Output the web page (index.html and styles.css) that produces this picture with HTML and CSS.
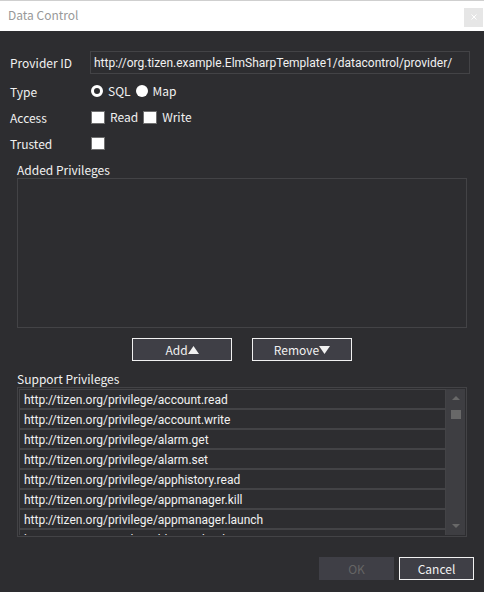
FILE: index.html
```html
<!DOCTYPE html>
<html lang="en">
<head>
<meta charset="utf-8">
<title>Data Control</title>
<link rel="stylesheet" href="styles.css">
</head>
<body>
<div class="dialog">
  <header class="titlebar">
    <h1 class="title">Data Control</h1>
    <button class="close" type="button" aria-label="Close"><svg width="6" height="6" viewBox="0 0 6 6"><path d="M.5 .5L5.500 5.500M5.500 .5L.5 5.500"/></svg></button>
  </header>
  <form class="content">
    <div class="field provider">
      <label class="name" for="provider">Provider ID</label>
      <input class="text" id="provider" type="text" value="http://org.tizen.example.ElmSharpTemplate1/datacontrol/provider/">
    </div>
    <div class="field">
      <span class="name">Type</span>
      <label class="choice"><input class="radio" type="radio" name="type" checked>SQL</label>
      <label class="choice"><input class="radio" type="radio" name="type">Map</label>
    </div>
    <div class="field">
      <span class="name">Access</span>
      <label class="choice"><input class="check" type="checkbox">Read</label>
      <label class="choice"><input class="check" type="checkbox">Write</label>
    </div>
    <div class="field">
      <label class="name" for="trusted">Trusted</label>
      <span class="choice"><input class="check" id="trusted" type="checkbox"></span>
    </div>
    <section class="group added">
      <h2 class="caption">Added Privileges</h2>
      <div class="box"></div>
    </section>
    <div class="moves">
      <button class="btn wide" type="button">Add<svg width="11" height="8" viewBox="0 0 11 8"><path d="M5.500 0L11 8H0z"/></svg></button>
      <button class="btn wide" type="button">Remove<svg width="11" height="8" viewBox="0 0 11 8"><path d="M0 0H11L5.500 8z"/></svg></button>
    </div>
    <section class="group">
      <h2 class="caption">Support Privileges</h2>
      <div class="box list">
        <ul class="items">
          <li class="item">http://tizen.org/privilege/account.read</li>
          <li class="item">http://tizen.org/privilege/account.write</li>
          <li class="item">http://tizen.org/privilege/alarm.get</li>
          <li class="item">http://tizen.org/privilege/alarm.set</li>
          <li class="item">http://tizen.org/privilege/apphistory.read</li>
          <li class="item">http://tizen.org/privilege/appmanager.kill</li>
          <li class="item">http://tizen.org/privilege/appmanager.launch</li>
          <li class="item">http://tizen.org/privilege/bluetooth.admin</li>
        </ul>
        <div class="scrollbar">
          <svg width="8" height="4" viewBox="0 0 8 4"><path d="M4 0L8 4H0z"/></svg>
          <div class="track"><div class="thumb"></div></div>
          <svg width="8" height="4" viewBox="0 0 8 4"><path d="M0 0H8L4 4z"/></svg>
        </div>
      </div>
    </section>
    <footer class="actions">
      <button class="btn" type="button" disabled>OK</button>
      <button class="btn" type="button">Cancel</button>
    </footer>
  </form>
</div>
</body>
</html>
```
FILE: styles.css
```css
* { box-sizing: border-box; }

body {
  margin: 0;
  background: #2d2d30;
  color: #f1f1f1;
  font: 12px/16px "Noto Sans CJK KR", "Noto Sans", sans-serif;
}

button, input { font: inherit; color: inherit; }

.dialog { min-height: 100vh; }

.titlebar {
  display: flex;
  align-items: center;
  justify-content: space-between;
  height: 31px;
  padding: 2px 1px 0 8px;
  border-top: 1px solid #cfcfcf;
  background: #fff;
  color: #999;
}

.title { margin: 0 0 4px; font-size: 12px; font-weight: 400; }

.close {
  display: grid;
  place-items: center;
  width: 19px;
  height: 19px;
  padding: 0;
  border: 0;
  background: #e6e6e6;
}

.close svg { stroke: #fff; fill: none; }

.content { padding: 20px 10px 12px; }

.field { display: flex; align-items: center; height: 26px; }
.provider { height: 23px; margin-bottom: 5px; }
.name { width: 80px; flex: none; }

.text {
  flex: 1;
  min-width: 0;
  height: 23px;
  margin-right: 4px;
  padding: 0 3px;
  border: 1px solid #434346;
  background: #2d2d30;
}

.text, .item { font-family: Roboto, sans-serif; }

.choice { display: flex; align-items: center; gap: 5px; margin: 0 4px 2px 1px; }

.radio, .check { appearance: none; margin: 0; flex: none; }
.radio { width: 12px; height: 12px; border-radius: 50%; background: #fff; }
.radio:checked { border: 3px solid #fff; background: #2d2d30; }
.check { width: 14px; height: 13px; border: 1px solid #707070; background: #fff; }

.group { margin: 0 7px; }
.added { padding-top: 5px; }
.caption { margin: 0; font-size: 12px; font-weight: 400; }
.box { height: 150px; border: 1px solid #434346; }

.moves { display: flex; justify-content: center; gap: 20px; padding: 10px 0; }

.btn {
  display: flex;
  align-items: center;
  justify-content: center;
  width: 75px;
  height: 23px;
  padding: 0;
  border: 1px solid #f1f1f1;
  background: #3f3f46;
}

.btn:disabled { border-color: #3f3f46; color: #656565; }
.btn svg { fill: #f1f1f1; }
.wide { width: 100px; }

.list { display: flex; padding: 1px; }

.items {
  flex: 1;
  margin: 0;
  padding: 0;
  list-style: none;
  overflow: hidden;
}

.item { height: 20px; padding: 2px 4px 0; border: 1px solid #434346; }

.scrollbar {
  display: flex;
  flex-direction: column;
  align-items: center;
  width: 19px;
  padding: 7px 0;
  background: #3e3e42;
}

.scrollbar svg { fill: #686868; }
.track { flex: 1; padding-top: 10px; }
.thumb { width: 10px; height: 9px; background: #686868; }

.actions { display: flex; justify-content: flex-end; gap: 5px; margin-top: 20px; }
```
